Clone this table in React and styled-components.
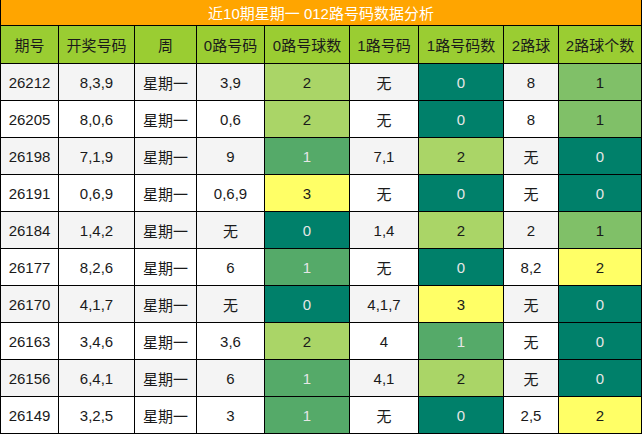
import styled, { createGlobalStyle } from 'styled-components';

const GlobalStyle = createGlobalStyle`
  body {
    margin: 0;
    background: #ffffff;
    font-family: "Liberation Sans", "Noto Sans CJK SC", sans-serif;
  }
`;

const headers = ['期号', '开奖号码', '周', '0路号码', '0路号球数', '1路号码', '1路号码数', '2路球', '2路球个数'];

const rows = [
  ['26212', '8,3,9', '星期一', '3,9', 2, '无', 0, '8', 1],
  ['26205', '8,0,6', '星期一', '0,6', 2, '无', 0, '8', 1],
  ['26198', '7,1,9', '星期一', '9', 1, '7,1', 2, '无', 0],
  ['26191', '0,6,9', '星期一', '0,6,9', 3, '无', 0, '无', 0],
  ['26184', '1,4,2', '星期一', '无', 0, '1,4', 2, '2', 1],
  ['26177', '8,2,6', '星期一', '6', 1, '无', 0, '8,2', 2],
  ['26170', '4,1,7', '星期一', '无', 0, '4,1,7', 3, '无', 0],
  ['26163', '3,4,6', '星期一', '3,6', 2, '4', 1, '无', 0],
  ['26156', '6,4,1', '星期一', '6', 1, '4,1', 2, '无', 0],
  ['26149', '3,2,5', '星期一', '3', 1, '无', 0, '2,5', 2],
];

// colour scale teal -> yellow, like the spreadsheet's conditional format
const scale = (v, max) => {
  const t = v / max;
  const r = Math.round(0 + (255 - 0) * t);
  const g = Math.round(128 + (255 - 128) * t);
  const b = Math.round(106 + (102 - 106) * t);
  return { bg: `rgb(${r}, ${g}, ${b})`, light: t < 0.4 };
};

const App = () => {
  return (
    <>
      <GlobalStyle />
      <Table>
        <Title>近10期星期一 012路号码数据分析</Title>
        {headers.map((h) => (
          <HeadCell key={h}>{h}</HeadCell>
        ))}
        {rows.map((row, i) =>
          row.map((val, j) => {
            const isCount = j === 4 || j === 6 || j === 8;
            if (isCount) {
              const c = scale(val, j === 8 ? 2 : 3);
              return (
                <Cell key={`${i}-${j}`} $bg={c.bg} $light={c.light}>
                  {val}
                </Cell>
              );
            }
            return (
              <Cell key={`${i}-${j}`} $bg={i % 2 === 0 ? '#f4f4f4' : '#ffffff'}>
                {val}
              </Cell>
            );
          })
        )}
      </Table>
    </>
  );
};

// Estilos
const Table = styled.div`
  display: grid;
  grid-template-columns: 57px 75px 61px 67px 84px 68px 84px 54px 82px;
  grid-template-rows: 25px 37px repeat(10, 36px);
  gap: 1px;
  width: 642px;
  box-sizing: border-box;
  padding: 0 1px 1px 1px;
  background: #000000;
`;

const Title = styled.div`
  grid-column: 1 / -1;
  display: flex;
  align-items: center;
  justify-content: center;
  background: #ffa500;
  color: #ffffff;
  font-size: 15px;
`;

const HeadCell = styled.div`
  display: flex;
  align-items: center;
  justify-content: center;
  background: #9acd32;
  color: #1a1a1a;
  font-size: 15px;
  white-space: nowrap;
`;

const Cell = styled.div`
  display: flex;
  align-items: center;
  justify-content: center;
  background: ${(p) => p.$bg};
  color: ${(p) => (p.$light ? '#e6e6e6' : '#1a1a1a')};
  font-size: 15px;
  white-space: nowrap;
`;

export default App;
